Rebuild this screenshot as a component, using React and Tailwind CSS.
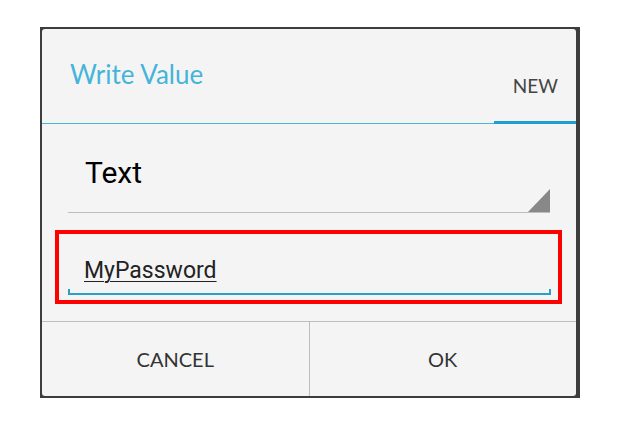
export default function App() {
  return (
    <div className="relative w-[620px] h-[429px] bg-white overflow-hidden">
      <div className="ml-[40px] mt-[27px] w-[540px] h-[371px] bg-[#3d3d3d] pt-[2px] pl-[2px] pr-[4px] pb-[2px]">
        <div className="flex h-full flex-col overflow-hidden rounded-[3px] bg-[#f4f4f4]">
          <div className="flex h-[94px] shrink-0 items-start justify-between">
            <div
              className="pl-[28px] pt-[32px] text-[26px] leading-none text-[#45b4da]"
              style={{ fontFamily: "Lato, 'Open Sans', sans-serif" }}
            >
              Write Value
            </div>
            <div
              className="pr-[18px] pt-[47px] text-[19px] leading-none text-[#444]"
              style={{ fontFamily: "Lato, 'Open Sans', sans-serif" }}
            >
              NEW
            </div>
          </div>
          <div className="relative h-[1px] shrink-0 bg-[#4bb6da]">
            <div className="absolute right-0 top-[-2px] h-[3px] w-[82px] bg-[#1d9fd1]" />
          </div>

          <div className="mx-[26px] mt-[30px] flex h-[59px] shrink-0 items-start border-b border-[#bdbdbd] relative">
            <span
              className="pl-[17px] text-[30px] leading-[38px] text-black"
              style={{ fontFamily: "Roboto, sans-serif" }}
            >
              Text
            </span>
            <svg
              className="absolute right-0 bottom-0"
              width="22"
              height="23"
              viewBox="0 0 22 23"
            >
              <polygon points="22,0 22,23 0,23" fill="#888888" />
            </svg>
          </div>

          <div className="ml-[13px] mt-[17px] h-[74px] w-[507px] shrink-0 border-[4px] border-[#ff0000] relative">
            <div
              className="absolute left-[25px] top-[25px] text-[23px] leading-none text-[#222] underline decoration-1 underline-offset-[3px]"
              style={{ fontFamily: "Roboto, sans-serif" }}
            >
              MyPassword
            </div>
            <div className="absolute left-[9px] right-[7px] top-[55px] h-[6px] border-x-2 border-b-2 border-[#2aa0c6]" />
          </div>

          <div className="mt-[17px] flex flex-1 border-t border-[#bdbdbd]">
            <div
              className="flex flex-1 items-center justify-center border-r border-[#bdbdbd] text-[20px] text-[#333]"
              style={{ fontFamily: "Lato, 'Open Sans', sans-serif" }}
            >
              CANCEL
            </div>
            <div
              className="flex flex-1 items-center justify-center text-[20px] text-[#333]"
              style={{ fontFamily: "Lato, 'Open Sans', sans-serif" }}
            >
              OK
            </div>
          </div>
        </div>
      </div>
    </div>
  );
}
